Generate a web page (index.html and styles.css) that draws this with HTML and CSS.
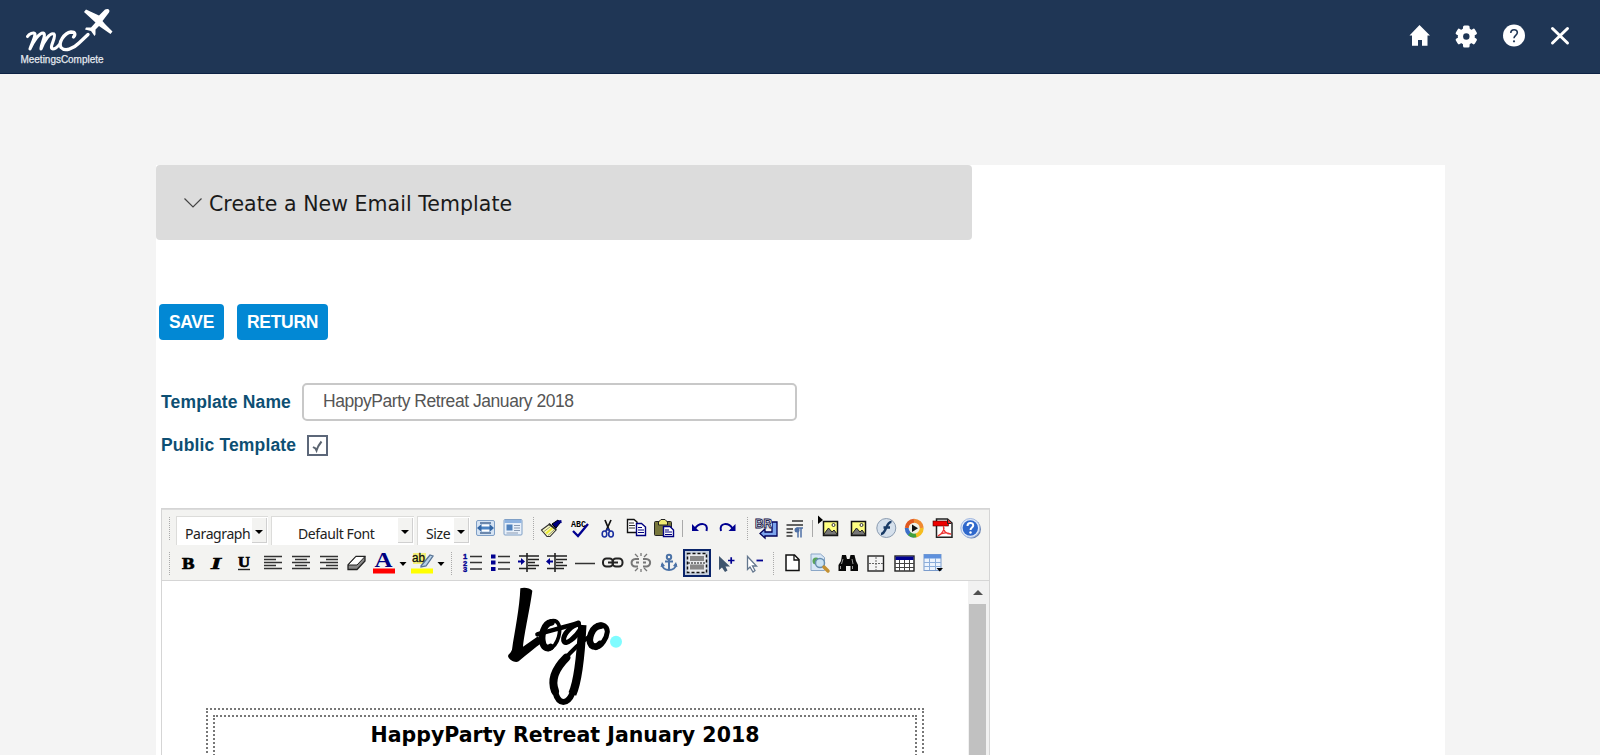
FILE: index.html
```html
<!DOCTYPE html>
<html lang="en">
<head>
<meta charset="utf-8">
<title>MeetingsComplete</title>
<link rel="stylesheet" href="styles.css">
</head>
<body>
<header class="topbar">
  <svg class="brand" width="120" height="73" viewBox="0 0 120 73">
    <g fill="none" stroke="#fff" stroke-linecap="round" stroke-linejoin="round">
      <path stroke-width="3.1" d="M27.500 36.500C29 34 34 31.500 35 34C35 38 31 45 30 49C33 42 39 33 43 33C47 34 41 44 41 49C44 41 50 32 54 34C57 37 48 48 53 49C56 49 58 46 60 44"/>
      <path stroke-width="3.3" d="M73.500 37C76 34 75 32 71 32C64 33 58 43 61 47.500C65 52 73 49 79 43L88 34.500"/>
    </g>
    <path fill="#fff" d="M105 9.500C108 8 110.500 10 109 12.500L102.500 21L105 24L112.500 31.500L110.500 34L99 26L95.500 29.500L95.500 34.500L94.500 36L91 31L85 29.500L86 27.500L91 27.500L95.500 22.500L84 12L86 9.500L99 15.500Z"/>
    <text x="20.500" y="63" fill="#e6ebf1" stroke="#e6ebf1" stroke-width=".25" font-size="11" textLength="83" lengthAdjust="spacingAndGlyphs">MeetingsComplete</text>
  </svg>
  <nav class="actions">
    <svg width="22" height="24" viewBox="0 0 22 24"><path fill="#fff" d="M11.500 1L22 11.500H19.500V21.800H14V16H10V21.800H4V11.500H1.500Z"/></svg>
    <svg width="24" height="24" viewBox="0 0 24 24"><g fill="#fff"><circle cx="12.300" cy="12.500" r="8.500"/><rect x="9" y="1.500" width="6.600" height="22" rx="1.500"/><rect x="9" y="1.500" width="6.600" height="22" rx="1.500" transform="rotate(60 12.300 12.500)"/><rect x="9" y="1.500" width="6.600" height="22" rx="1.500" transform="rotate(120 12.300 12.500)"/></g><circle cx="12.300" cy="12.500" r="3.200" fill="#1f3655"/></svg>
    <svg width="24" height="24" viewBox="0 0 24 24"><circle cx="12" cy="11.500" r="11" fill="#fff"/><path d="M8.800 9C8.800 4.500 15.500 4.700 15.300 8.800C15.200 11.300 12 11.500 12 14.200" fill="none" stroke="#1f3655" stroke-width="1.600"/><circle cx="12" cy="17.300" r="1.100" fill="#1f3655"/></svg>
    <svg width="20" height="24" viewBox="0 0 20 24"><path d="M2.500 4.500L17.500 19M17.500 4.500L2.500 19" stroke="#fff" stroke-width="3" stroke-linecap="round"/></svg>
  </nav>
</header>

<main class="panel">
  <h1 class="section-title">
    <svg width="20" height="12" viewBox="0 0 20 12"><path d="M1.500 .500L10 9L18.500 .500" fill="none" stroke="#444" stroke-width="1.200"/></svg>
    <span>Create a New Email Template</span>
  </h1>

  <div class="buttons"><button class="btn save">SAVE</button><button class="btn return">RETURN</button></div>

  <div class="field name-field"><label class="label" for="name">Template Name</label><input class="input" id="name" value="HappyParty Retreat January 2018"></div>
  <div class="field public-field"><span class="label">Public Template</span><span class="check"><svg width="17" height="17" viewBox="0 0 17 17"><path d="M4 10L6.500 11.500L7.500 13.500C8.500 10 10 7.500 12.500 4.500" fill="none" stroke="#5b6470" stroke-width="2"/></svg></span></div>

  <section class="editor">
    <div class="toolbar">
      <div class="row">
        <i class="grip first"></i>
        <div class="select paragraph"><span>Paragraph</span><b class="drop"></b></div>
        <div class="select font"><span>Default Font</span><b class="drop"></b></div>
        <div class="select size"><span>Size</span><b class="drop"></b></div>
        <svg class="ic" viewBox="0 0 28 28"><rect x="4.500" y="6.500" width="18" height="15" rx="1.500" fill="#d5e3f3" stroke="#7f9fc6"/><path d="M8 9H19M8 19H19" stroke="#496b96" stroke-width="1.500"/><rect x="8" y="11" width="11" height="6" fill="#fff"/><path d="M9 14H18" stroke="#4c84c4" stroke-width="3"/><path d="M5 14L9.500 10V18ZM22 14L17.500 10V18Z" fill="#3467a5"/></svg>
        <svg class="ic" viewBox="0 0 28 28"><rect x="4" y="5.500" width="18" height="15.500" rx="1" fill="#e8f0fa" stroke="#7f9fc6"/><path d="M4.500 7.500H21.500" stroke="#8db2e0" stroke-width="3"/><rect x="6.500" y="10.500" width="6" height="6" fill="#4f81bd"/><path d="M14 11.500H20M14 14H20M14 16.500H20M6.500 19H18" stroke="#8a9bb3"/></svg>
        <i class="grip"></i>
        <svg class="ic" viewBox="0 0 28 28"><path d="M14 10L20 6L22 9L18 14Z" fill="#000080" stroke="#000"/><path d="M20 8L23.500 7.500" stroke="#000080" stroke-width="3"/><path d="M3.500 16L11 10.500L18 16L12 22.500H9Z" fill="#f7f7c5" stroke="#333" stroke-width="1.100"/><path d="M6 17.500L12.500 12.500M10 21.500L16 16" stroke="#999960"/><path d="M8 19.500L14.500 14" stroke="#ecec30" stroke-width="2"/><path d="M11 9.500L18.500 15.500" stroke="#222" stroke-width="1.500"/></svg>
        <svg class="ic" viewBox="0 0 28 28"><text x="5" y="12.500" class="mono" textLength="15" lengthAdjust="spacingAndGlyphs">ABC</text><path d="M7 17L12 22L22 10" fill="none" stroke="#000090" stroke-width="2.300"/></svg>
        <svg class="ic" viewBox="0 0 28 28"><path d="M11 6L15.500 17M17 6L12 17" stroke="#111" stroke-width="1.700"/><g fill="none" stroke="#1a2fa0" stroke-width="1.600"><ellipse cx="10.500" cy="20" rx="2.300" ry="3"/><ellipse cx="17" cy="20" rx="2.300" ry="3"/><path d="M12 17L14 15L16 17"/></g></svg>
        <svg class="ic" viewBox="0 0 28 28"><path d="M5.500 5.500H12L15 8V18.500H5.500Z" fill="#fff" stroke="#111" stroke-width="1.400"/><path d="M7 9H12M7 11.500H13M7 14H13" stroke="#333"/><path d="M14.500 9.500H19.500L23.500 13V21.500H14.500Z" fill="#fff" stroke="#000080" stroke-width="1.400"/><path d="M16 13.500H20M16 16H22M16 18.500H22" stroke="#000080"/></svg>
        <svg class="ic" viewBox="0 0 28 28"><rect x="4.500" y="7.500" width="17" height="14" rx="1" fill="#77763b" stroke="#222"/><path d="M8.500 11V8L11 5.500H15L17.500 8V11Z" fill="#f0eb72" stroke="#222"/><path d="M13.500 12.500H20L23.500 16V22.500H13.500Z" fill="#fff" stroke="#000080" stroke-width="1.400"/><path d="M15 16H19M15 18H22M15 20.500H22" stroke="#000080"/></svg>
        <i class="rule"></i>
        <svg class="ic" viewBox="0 0 28 28"><path d="M9 14.500C13 8.500 23 8 20.500 17" fill="none" stroke="#000090" stroke-width="2"/><path d="M6 10V17H13Z" fill="#000090"/></svg>
        <svg class="ic" viewBox="0 0 28 28"><path d="M18.500 14.500C15 8.500 4.500 8 7 17" fill="none" stroke="#000090" stroke-width="2"/><path d="M21.500 10V17H14.500Z" fill="#000090"/></svg>
        <i class="grip"></i>
        <svg class="ic" viewBox="0 0 28 28"><path d="M20 8H25V22H13V24L8 19.500L13 15V18H20Z" fill="#7da4ed" stroke="#000058" stroke-width="1.300"/><rect x="3" y="4.500" width="17" height="10" rx="1" fill="#d6d6e6"/><text x="3" y="14" class="sans" font-size="12" font-weight="bold" fill="#fff" stroke="#20204a" stroke-width=".9" textLength="17" lengthAdjust="spacingAndGlyphs">BR</text></svg>
        <svg class="ic" viewBox="0 0 28 28"><path d="M12 7H23M6.500 11H23M6.500 15H13M6.500 18.500H12.500M6.500 22H12.500" stroke="#333" stroke-width="1.300"/><path d="M18 14V23.500M21 14V23.500M16.500 14H23" stroke="#4f70a5" stroke-width="1.500"/><circle cx="17" cy="16" r="2.500" fill="#4f70a5"/></svg>
        <i class="rule"></i>
        <svg class="ic" viewBox="0 0 28 28"><path d="M2 1.500L7 6L2 10Z" fill="#000"/><rect x="7.500" y="7.500" width="14" height="14" fill="#ffff82" stroke="#111" stroke-width="1.500"/><path d="M8 20L12.500 14L16 18L18 16L21 20V21H8Z" fill="#777" stroke="#222"/><circle cx="17.500" cy="11" r="1.500" fill="#fff" stroke="#333"/></svg>
        <svg class="ic" viewBox="0 0 28 28"><rect x="7.500" y="7.500" width="14" height="14" fill="#ffff82" stroke="#111" stroke-width="1.500"/><path d="M8 20L12.500 14L16 18L18 16L21 20V21H8Z" fill="#777" stroke="#222"/><circle cx="17.500" cy="11" r="1.500" fill="#fff" stroke="#333"/></svg>
        <svg class="ic" viewBox="0 0 28 28"><circle cx="14.300" cy="14" r="9.500" fill="#d5e0ec" stroke="#8a9bb0"/><path d="M19.500 8C14 7 14.500 20 9 20M11.500 13.500H18" fill="none" stroke="#193b66" stroke-width="2.500"/></svg>
        <svg class="ic" viewBox="0 0 28 28"><g fill="none" stroke-width="4.500"><path d="M7 14A7.500 7.500 0 0 1 14 7" stroke="#e05921"/><path d="M14 7A7.500 7.500 0 0 1 21.500 14" stroke="#f08a30"/><path d="M21.500 14A7.500 7.500 0 0 1 14 21.500" stroke="#f5bd20"/><path d="M14 21.500A7.500 7.500 0 0 1 7 14" stroke="#3c70c9"/><path d="M16 21A7.500 7.500 0 0 1 9.500 19.500" stroke="#42a13c"/></g><circle cx="14.200" cy="14.200" r="5.500" fill="#eef1e8"/><path d="M12 10.500L18 14.200L12 18Z" fill="#111"/></svg>
        <svg class="ic" viewBox="0 0 28 28"><path d="M8.500 5H19.500L24 9V23.300H8.500Z" fill="#fff" stroke="#222" stroke-width="1.500"/><rect x="5" y="7" width="15.500" height="5" fill="#e00" stroke="#400" stroke-width=".6"/><path d="M19.500 5V9.500H23.500" fill="#e22" stroke="#222"/><path d="M10 22C14 20 17 15 15.500 13C15 17 18 20 23 20C18 18 13 19 10 22" fill="none" stroke="#e33" stroke-width="1.300"/></svg>
        <svg class="ic" viewBox="0 0 28 28"><circle cx="15.500" cy="15" r="9.500" fill="#6681b3"/><circle cx="14.300" cy="14" r="9.500" fill="#dfe9f8" stroke="#9eb5df"/><circle cx="14.300" cy="14" r="7.700" fill="#2f68cc"/><path d="M11.500 12C11.500 8 17.500 8 17.200 11.700C17 13.500 14.500 13.500 14.500 16" fill="none" stroke="#fff" stroke-width="2"/><circle cx="14.500" cy="18.500" r="1.200" fill="#fff"/></svg>
      </div>
      <div class="row second">
        <i class="grip first"></i>
        <svg class="ic" viewBox="0 0 28 28"><text x="8" y="19.500" class="serif fat" font-size="17" font-weight="bold" textLength="12.500" lengthAdjust="spacingAndGlyphs">B</text></svg>
        <svg class="ic" viewBox="0 0 28 28"><text x="9" y="19.500" class="serif fat" font-size="17" font-weight="bold" font-style="italic" textLength="10" lengthAdjust="spacingAndGlyphs">I</text></svg>
        <svg class="ic" viewBox="0 0 28 28"><text x="8" y="17.500" class="serif fat" font-size="15.500" font-weight="bold" textLength="12" lengthAdjust="spacingAndGlyphs">U</text><path d="M8 20.500H20" stroke="#222" stroke-width="1.400"/></svg>
        <svg class="ic" viewBox="0 0 28 28"><path d="M6 7.500H24M6 10.500H18M6 13.500H24M6 16.500H18M6 19.500H24" class="lines"/></svg>
        <svg class="ic" viewBox="0 0 28 28"><path d="M6 7.500H24M9 10.500H21M6 13.500H24M9 16.500H21M6 19.500H24" class="lines"/></svg>
        <svg class="ic" viewBox="0 0 28 28"><path d="M6 7.500H24M12 10.500H24M6 13.500H24M12 16.500H24M6 19.500H24" class="lines"/></svg>
        <svg class="ic" viewBox="0 0 28 28"><path d="M6 16L14 7.500H23V12L15 20.500H6Z" fill="#888" stroke="#222" stroke-width="1.300"/><path d="M6 16L14 7.500H23L15 16Z" fill="#fff" stroke="#222"/></svg>
        <svg class="ic" viewBox="0 0 28 28"><text x="4.500" y="18" class="serif navy" font-size="20" font-weight="bold" textLength="18" lengthAdjust="spacingAndGlyphs">A</text><rect x="3" y="19.500" width="22" height="5" fill="#f00"/></svg>
        <i class="caret"></i>
        <svg class="ic" viewBox="0 0 28 28"><rect x="5" y="4" width="13" height="11" fill="#f5f17c"/><path d="M13 17L22 6L25 7L18 17L13 18Z" fill="#b8d2ea" stroke="#587394" stroke-width="1.300"/><text x="4" y="13" class="sans" font-size="12.500" stroke="#222" stroke-width=".3" textLength="13" lengthAdjust="spacingAndGlyphs">ab</text><rect x="3" y="19.500" width="22" height="5" fill="#ff0"/></svg>
        <i class="caret"></i>
        <i class="grip wide"></i>
        <svg class="ic" viewBox="0 0 28 28"><path d="M12 7.500H24M12 13.500H24M12 20H24" class="lines"/><g class="sans blue" font-size="7.500" font-weight="bold" stroke="#000090" stroke-width=".4"><text x="5" y="10">1</text><text x="5" y="16.500">2</text><text x="5" y="23">3</text></g></svg>
        <svg class="ic" viewBox="0 0 28 28"><path d="M12 7.500H24M12 13.500H24M12 20H24" class="lines"/><path d="M5 5.500H9.500V9.500H5ZM5 11.500H9.500V15.500H5ZM5 18H9.500V22H5Z" fill="#000090"/></svg>
        <svg class="ic" viewBox="0 0 28 28"><path d="M5 7H25M14 10.500H25M14 13.500H21M14 16.500H25M5 19.500H22M13 4V23" stroke="#222" stroke-width="1.600"/><path d="M4 12.500H8" stroke="#000090" stroke-width="2"/><path d="M7 9L11 12.500L7 16Z" fill="#000090"/></svg>
        <svg class="ic" viewBox="0 0 28 28"><path d="M5 7H25M14 10.500H25M14 13.500H21M14 16.500H25M5 19.500H22M13 4V23" stroke="#222" stroke-width="1.600"/><path d="M7 12.500H11" stroke="#000090" stroke-width="2"/><path d="M8 9L4 12.500L8 16Z" fill="#000090"/></svg>
        <svg class="ic" viewBox="0 0 28 28"><path d="M5 14.500H25" stroke="#333" stroke-width="1.500"/></svg>
        <svg class="ic" viewBox="0 0 28 28"><g fill="none" stroke="#222" stroke-width="2"><rect x="5" y="9.500" width="10" height="8" rx="3.500"/><rect x="14.500" y="9.500" width="10" height="8" rx="3.500"/><path d="M10 13.500H20"/></g></svg>
        <svg class="ic" viewBox="0 0 28 28"><g fill="none" stroke="#777" stroke-width="2"><path d="M13 10H9.500C4 10 4.500 18 9.500 17.500H12M10 13.500H13M17 10H20C26 10 25 18 20 17.500H17M17 13.500H20"/><path d="M9 5L12 8M15 4V7M21 5L18 8M9 22L12 19M15 23V20M21 22L18 19" stroke-width="1.300"/></g></svg>
        <svg class="ic" viewBox="0 0 28 28"><g fill="none" stroke="#4b72a6" stroke-width="2"><circle cx="15" cy="8" r="2.200"/><path d="M15 10V20M11 12.500H19M8 15C8 23 22 23 22 15"/></g><path d="M6.500 18L8 13L11 17ZM23.500 18L22 13L19 17Z" fill="#4b72a6"/></svg>
        <span class="toggle"><svg class="ic" viewBox="0 0 28 28"><rect x="4.500" y="4.500" width="19" height="19" fill="#e8eaec" stroke="#111" stroke-width="1.500" stroke-dasharray="3 2"/><path d="M7 9.500H21M7 18H21" stroke="#888" stroke-width="5"/><path d="M5 14H23" stroke="#111" stroke-dasharray="2 1"/></svg></span>
        <svg class="ic" viewBox="0 0 28 28"><path d="M7 7V21L10 18.500L13 23L15.500 21.500L13.500 17.500H18Z" fill="#40566f"/><path d="M16 11.500H22.500M19.200 8.300V14.700" stroke="#000090" stroke-width="1.700"/></svg>
        <svg class="ic" viewBox="0 0 28 28"><path d="M7.500 7.500V20.500L10 18L13 23L15 21.500L12.500 17H16.500Z" fill="#fff" stroke="#64778e" stroke-width="1.300"/><path d="M16.500 11.500H23" stroke="#000090" stroke-width="1.800"/></svg>
        <i class="grip"></i>
        <svg class="ic" viewBox="0 0 28 28"><path d="M8 6H16.500L21 10.500V21.500H8Z" fill="#fff" stroke="#111" stroke-width="1.500"/><path d="M16 6V11H21" fill="none" stroke="#111" stroke-width="1.300"/></svg>
        <svg class="ic" viewBox="0 0 28 28"><path d="M5 5H14.500L18.500 8.500V21.500H5Z" fill="#d8e7f6" stroke="#8ba7c7"/><circle cx="10" cy="12" r="3.500" fill="#58a45a"/><circle cx="14" cy="14" r="4.500" fill="#c9e2f2" stroke="#668eb0" stroke-width="1.500"/><path d="M18 18L22 22" stroke="#c49132" stroke-width="3.500" stroke-linecap="round"/></svg>
        <svg class="ic" viewBox="0 0 28 28"><path d="M8 6H12L13 10H15.500L16.500 6H20.500L22 12L24 16V22H16.500V17H12V22H4.500V16L7 12Z" fill="#080808"/><path d="M9 10L7.500 15M18 10L19 15M6.500 17V20M18.500 17V20" stroke="#999"/></svg>
        <svg class="ic" viewBox="0 0 28 28"><rect x="6" y="7" width="15.500" height="15" fill="#f5f5f5" stroke="#222" stroke-width="1.400"/><path d="M14 8V21M7 14.500H21" stroke="#666" stroke-dasharray="2 1"/></svg>
        <svg class="ic" viewBox="0 0 28 28"><rect x="5" y="7" width="19" height="15" fill="#fff" stroke="#222" stroke-width="1.400"/><rect x="5.500" y="7.500" width="18" height="3.500" fill="#000090"/><path d="M9.500 11V22M14.500 11V22M19.500 11V22M5 14.500H24M5 18.500H24" stroke="#444"/></svg>
        <svg class="ic" viewBox="0 0 28 28"><rect x="6" y="5.500" width="17" height="16" fill="#edf4fd" stroke="#7b9ccc"/><rect x="6" y="5.500" width="17" height="4" fill="#5f91dd"/><path d="M11.500 9V21M17.500 9V21M6 13.500H23M6 17.500H23" stroke="#8caedb"/><path d="M18.500 19H25L21.700 22.500Z" fill="#000"/></svg>
      </div>
    </div>
    <div class="document">
      <div class="page">
        <svg class="logo" width="170" height="127" viewBox="0 18 510 381">
          <path d="M121 40C130 36 151 38 157 47C151 94 133 174 129 215L174 184L188 202C163 220 138 240 116 259C107 265 88 257 84 244C85 237 91 236 96 224C104 170 119 99 121 40Z"/>
          <g fill="none" stroke="#000" stroke-linecap="round" stroke-linejoin="round">
            <path stroke-width="20" d="M214 142C190 145 182 185 189 207C193 219 204 222 212 216"/>
            <path stroke-width="11" d="M212 138C238 132 243 160 236 185C231 203 222 217 206 223"/>
            <path stroke-width="13" d="M172 178C212 166 258 156 296 143"/>
            <path stroke-width="15" d="M296 148C276 149 248 178 251 197C256 214 286 188 304 160"/>
            <path stroke-width="25" stroke-linecap="butt" d="M307 150C303 229 296 315 277 357"/>
            <path stroke-width="18" d="M278 353C263 390 236 391 226 352"/>
            <path stroke-width="24" d="M225 348C210 310 232 275 259 248"/>
            <path stroke-width="12" d="M252 256C272 230 307 198 335 180"/>
            <path stroke-width="20" d="M362 152C337 153 321 194 335 211C344 218 354 213 360 207"/>
            <path stroke-width="15" d="M352 153C370 145 381 155 382 170C380 190 365 213 348 218"/>
          </g>
          <circle cx="408" cy="200" r="18" fill="#7ffcff"/>
        </svg>
        <div class="frame"><div class="frame-inner"><h2 class="heading">HappyParty Retreat January 2018</h2></div></div>
      </div>
      <div class="scrollbar"><i class="up"></i><i class="thumb"></i></div>
    </div>
  </section>
</main>
</body>
</html>
```
FILE: styles.css
```css
* { box-sizing: border-box; }
body { margin: 0; height: 755px; overflow: hidden; background: #f4f4f4; font-family: "Liberation Sans", Arial, sans-serif; }
svg { display: block; flex: none; }

.topbar { height: 74px; background: #1f3655; border-bottom: 1px solid #0c2244; display: flex; justify-content: space-between; }
.actions { display: flex; align-items: flex-start; padding: 24px 30px 0 0; }
.actions svg + svg { margin-left: 24px; }

.panel { width: 1289px; height: 590px; margin: 91px 0 0 156px; background: #fff; overflow: hidden; }
.section-title { width: 816px; height: 75px; margin: 0; padding: 2px 0 0 27px; display: flex; align-items: center; gap: 6px; background: #dcdcdc; border-radius: 4px; font: 400 20.500px "DejaVu Sans", Verdana, sans-serif; letter-spacing: .05px; color: #1a1a1a; }

.buttons { display: flex; gap: 13px; margin: 64px 0 0 3px; }
.btn { height: 36px; padding: 0; border: 0; border-radius: 4px; background: #0288d4; color: #fff; font: 700 17.500px "Liberation Sans", Arial, sans-serif; letter-spacing: -.3px; }
.save { width: 65px; }
.return { width: 91px; }

.field { display: flex; align-items: center; }
.label { color: #0d4f73; font-size: 17.500px; font-weight: 700; letter-spacing: .15px; white-space: nowrap; }
.name-field { margin: 43px 0 0 5px; }
.name-field .label { width: 141px; }
.input { width: 495px; height: 38px; padding: 0 0 2px 19px; border: 2px solid #c8c8c8; border-radius: 5px; font: 17.500px "Liberation Sans", Arial, sans-serif; letter-spacing: -.45px; color: #555; }
.public-field { margin: 14px 0 0 5px; align-items: flex-start; }
.public-field .label { width: 146px; }
.check { width: 21px; height: 21px; border: 2px solid #5c6779; }

.editor { width: 829px; margin: 52px 0 0 5px; border: 1px solid #d5d5d5; }
.toolbar { height: 72px; padding: 4px 0 0 6px; background: #f3f3f1; border-top: 1px solid #dcdcdc; border-bottom: 1px solid #d5d5d5; }
.row { display: flex; height: 28px; }
.second { margin-top: 7px; }
.ic { width: 28px; height: 28px; }
.grip { width: 10px; height: 23px; flex: none; margin-top: 3px; background: repeating-linear-gradient(#aaa 0 1px, transparent 1px 2px) 5px 0 / 1px 100% no-repeat; }
.grip.first { width: 6px; background-position: 1px 0; }
.grip.wide { width: 12px; }
.rule { width: 8px; height: 17px; flex: none; margin-top: 6px; background: linear-gradient(#aaa, #aaa) 4px 0 / 1px 100% no-repeat; }
.caret { width: 10px; flex: none; height: 4px; margin-top: 13px; background: #000; clip-path: polygon(15% 0, 85% 0, 50% 100%); }
.select { display: flex; justify-content: space-between; height: 29px; margin-top: 2px; padding: 1px 1px 2px 8px; background: #fff; border: solid #dcdcda; border-width: 1px 0 0 1px; font: 14px/31px "Noto Sans", Tahoma, sans-serif; letter-spacing: -.4px; color: #222; flex: none; }
.paragraph { width: 92px; margin-left: 2px; }
.font { width: 143px; margin-left: 3px; padding-left: 26px; }
.size { width: 53px; margin: 2px 2px 0 3px; }
.drop { width: 15px; height: 25px; background: #f3f3f1; border: solid #d0d0d0; border-width: 0 1px 1px 0; display: flex; align-items: center; justify-content: center; padding-top: 4px; }
.drop::before { content: ""; border: 4px solid transparent; border-top: 4px solid #000; border-bottom: 0; }

.lines { stroke: #333; stroke-width: 1.500; }
.serif { font-family: "Liberation Serif", serif; }
.sans { font-family: "Liberation Sans", sans-serif; }
.mono { font: bold 9px "Liberation Mono", monospace; }
.fat { stroke: #000; stroke-width: .7; }
.navy { fill: #000080; }
.blue { fill: #000090; }
.toggle { width: 28px; height: 28px; margin: 0 1px; background: #c5cfdd; border: 2px solid #0a246a; display: flex; align-items: center; justify-content: center; flex: none; }

.document { display: flex; height: 180px; background: #fff; }
.page { flex: 1; display: flex; flex-direction: column; align-items: center; }
.frame { width: 718px; height: 100px; padding: 5px; border: 2px dotted #777; }
.frame-inner { height: 100px; border: 2px dotted #777; }
.heading { margin: 4px 0 0; text-align: center; font: 700 20.500px/28px "DejaVu Sans", Verdana, sans-serif; color: #000; }
.scrollbar { width: 21px; padding-right: 2px; background: #f1f1f1; display: flex; flex-direction: column; align-items: center; }
.up { margin-top: 9px; border: 5px solid transparent; border-bottom-color: #505050; border-top: 0; }
.thumb { width: 17px; height: 160px; margin-top: 9px; background: #c1c1c1; }
```
